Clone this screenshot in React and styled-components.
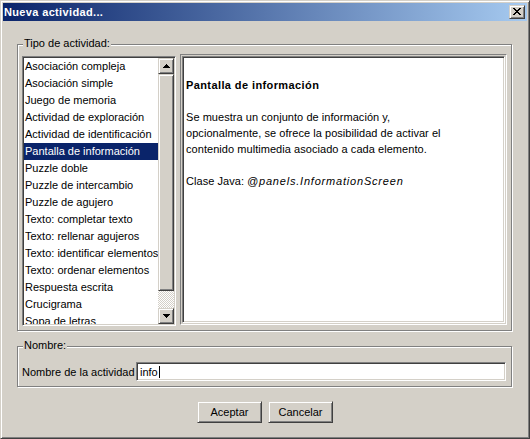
import React from "react";
import styled, { createGlobalStyle, css } from "styled-components";

const GlobalStyle = createGlobalStyle`
  html, body { margin: 0; padding: 0; background: #d4d0c8; }
  body { font-family: "Liberation Sans", Arial, sans-serif; font-size: 11px; color: #000; }
  * { box-sizing: border-box; }
`;

const raised = css`
  border: 1px solid;
  border-color: #d4d0c8 #404040 #404040 #d4d0c8;
  box-shadow: inset 1px 1px 0 #ffffff, inset -1px -1px 0 #808080;
  background: #d4d0c8;
`;

const sunken = css`
  border: 1px solid;
  border-color: #808080 #ffffff #ffffff #808080;
  box-shadow: inset 1px 1px 0 #404040, inset -1px -1px 0 #d4d0c8;
`;

const Window = styled.div`
  width: 530px;
  height: 439px;
  display: flex;
  flex-direction: column;
  padding: 2px;
  background: #d4d0c8;
  border: 1px solid;
  border-color: #d4d0c8 #404040 #404040 #d4d0c8;
  box-shadow: inset 1px 1px 0 #ffffff, inset -1px -1px 0 #808080;
`;

const TitleBar = styled.div`
  height: 18px;
  flex: none;
  display: flex;
  align-items: center;
  justify-content: space-between;
  padding: 0 2px 0 1px;
  background: linear-gradient(to right, #0a246a, #a6caf0);
`;

const Title = styled.span`
  color: #fff;
  font-weight: bold;
  font-size: 11px;
  letter-spacing: 0.35px;
  white-space: nowrap;
`;

const CloseButton = styled.div`
  ${raised};
  width: 16px;
  height: 14px;
  display: flex;
  align-items: center;
  justify-content: center;
  padding: 0 0 1px 0;
  svg { display: block; }
`;

const Body = styled.div`
  flex: 1;
  display: flex;
  flex-direction: column;
  padding: 23px 15px 0 14px;
`;

const GroupBox = styled.div`
  position: relative;
  height: ${(p) => p.$height}px;
  margin-top: ${(p) => p.$top || 0}px;
  padding: ${(p) => p.$pad};
  border: 1px solid #808080;
  box-shadow: inset 1px 1px 0 #ffffff, 1px 1px 0 #ffffff;
`;

const Legend = styled.span`
  position: absolute;
  left: 5px;
  top: -8px;
  line-height: 13px;
  padding: 0 1px;
  background: #d4d0c8;
  white-space: nowrap;
`;

const Split = styled.div`
  display: flex;
  gap: 4px;
  height: 100%;
  align-items: flex-start;
`;

const ListBox = styled.div`
  ${sunken};
  width: 154px;
  height: 270px;
  margin-top: 2px;
  padding: 1px;
  display: flex;
  background: #fff;
`;

const Items = styled.div`
  flex: 1;
  overflow: hidden;
  background: #fff;
`;

const Item = styled.div`
  height: 17px;
  line-height: 17px;
  padding-left: 1px;
  white-space: nowrap;
  overflow: hidden;
  background: ${(p) => (p.$selected ? "#0a246a" : "#fff")};
  color: ${(p) => (p.$selected ? "#fff" : "#000")};
`;

const ScrollBar = styled.div`
  width: 16px;
  display: flex;
  flex-direction: column;
`;

const ArrowButton = styled.div`
  ${raised};
  height: 16px;
  flex: none;
  display: flex;
  align-items: center;
  justify-content: center;
  svg { display: block; }
`;

const Thumb = styled.div`
  ${raised};
  height: 217px;
  flex: none;
`;

const Track = styled.div`
  flex: 1;
  background: repeating-conic-gradient(#d4d0c8 0% 25%, #ffffff 0% 50%) 0 0 / 2px 2px;
`;

const InfoFrame = styled.div`
  flex: 1;
  height: 271px;
  padding: 1px;
  border: 1px solid;
  border-color: #808080 #ffffff #ffffff #808080;
`;

const InfoPane = styled.div`
  ${sunken};
  height: 100%;
  background: #fff;
  padding: 20px 3px 0 3px;
  line-height: 16px;
`;

const InfoTitle = styled.div`
  font-weight: bold;
  letter-spacing: 0.4px;
`;

const InfoPara = styled.p`
  margin: 16px 0 0 0;
  letter-spacing: 0.05px;
  white-space: nowrap;
`;

const ClassName = styled.i`
  letter-spacing: 0.8px;
  margin-left: 3px;
`;

const FieldRow = styled.div`
  display: flex;
  align-items: center;
  height: 19px;
`;

const FieldLabel = styled.span`
  width: 114px;
  flex: none;
  white-space: nowrap;
`;

const TextField = styled.div`
  ${sunken};
  flex: 1;
  height: 19px;
  background: #fff;
  display: flex;
  align-items: center;
  padding-left: 3px;
`;

const Caret = styled.span`
  display: inline-block;
  width: 1px;
  height: 12px;
  background: #000;
  margin-left: 1px;
`;

const ButtonRow = styled.div`
  display: flex;
  justify-content: center;
  gap: 6px;
  margin-top: 14px;
  padding-left: 1px;
`;

const Button = styled.div`
  ${raised};
  width: 65px;
  height: 22px;
  display: flex;
  align-items: center;
  justify-content: center;
  font-size: 11px;
`;

const Arrow = ({ down }) => (
  <svg width="7" height="4" viewBox="0 0 7 4" shapeRendering="crispEdges">
    <path
      fill="#000"
      d={
        down
          ? "M0 0h7v1H0z M1 1h5v1H1z M2 2h3v1H2z M3 3h1v1H3z"
          : "M3 0h1v1H3z M2 1h3v1H2z M1 2h5v1H1z M0 3h7v1H0z"
      }
    />
  </svg>
);

const CloseGlyph = () => (
  <svg width="8" height="7" viewBox="0 0 8 7" shapeRendering="crispEdges">
    <path
      fill="#000"
      d="M0 0h2v1H0z M6 0h2v1H6z M1 1h2v1H1z M5 1h2v1H5z M2 2h4v1H2z M3 3h2v1H3z M2 4h4v1H2z M1 5h2v1H1z M5 5h2v1H5z M0 6h2v1H0z M6 6h2v1H6z"
    />
  </svg>
);

const activities = [
  "Asociación compleja",
  "Asociación simple",
  "Juego de memoria",
  "Actividad de exploración",
  "Actividad de identificación",
  "Pantalla de información",
  "Puzzle doble",
  "Puzzle de intercambio",
  "Puzzle de agujero",
  "Texto: completar texto",
  "Texto: rellenar agujeros",
  "Texto: identificar elementos",
  "Texto: ordenar elementos",
  "Respuesta escrita",
  "Crucigrama",
  "Sopa de letras",
];

export default function App() {
  return (
    <>
      <GlobalStyle />
      <Window>
        <TitleBar>
          <Title>Nueva actividad...</Title>
          <CloseButton>
            <CloseGlyph />
          </CloseButton>
        </TitleBar>
        <Body>
          <GroupBox $height={287} $pad="9px 4px 4px 4px">
            <Legend>Tipo de actividad:</Legend>
            <Split>
              <ListBox>
                <Items>
                  {activities.map((a, i) => (
                    <Item key={a} $selected={i === 5}>
                      {a}
                    </Item>
                  ))}
                </Items>
                <ScrollBar>
                  <ArrowButton>
                    <Arrow />
                  </ArrowButton>
                  <Thumb />
                  <Track />
                  <ArrowButton>
                    <Arrow down />
                  </ArrowButton>
                </ScrollBar>
              </ListBox>
              <InfoFrame>
                <InfoPane>
                  <InfoTitle>Pantalla de información</InfoTitle>
                  <InfoPara>
                    Se muestra un conjunto de información y,
                    <br />
                    opcionalmente, se ofrece la posibilidad de activar el
                    <br />
                    contenido multimedia asociado a cada elemento.
                  </InfoPara>
                  <InfoPara>
                    Clase Java:<ClassName>@panels.InformationScreen</ClassName>
                  </InfoPara>
                </InfoPane>
              </InfoFrame>
            </Split>
          </GroupBox>
          <GroupBox $height={41} $top={15} $pad="15px 5px 5px 4px">
            <Legend>Nombre:</Legend>
            <FieldRow>
              <FieldLabel>Nombre de la actividad</FieldLabel>
              <TextField>
                info
                <Caret />
              </TextField>
            </FieldRow>
          </GroupBox>
          <ButtonRow>
            <Button>Aceptar</Button>
            <Button>Cancelar</Button>
          </ButtonRow>
        </Body>
      </Window>
    </>
  );
}
